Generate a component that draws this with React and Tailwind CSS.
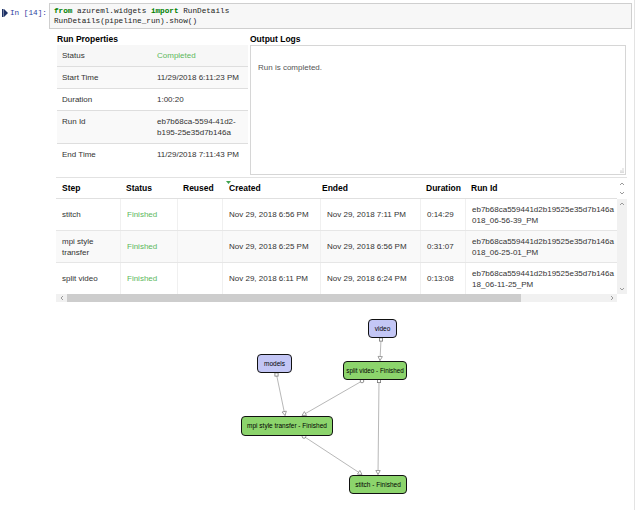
import React from "react";

const Chev = ({ d }) => {
  const paths = {
    up: "M1 4 L3 2 L5 4",
    down: "M1 2 L3 4 L5 2",
    left: "M4 1 L2 3 L4 5",
    right: "M2 1 L4 3 L2 5",
  };
  return (
    <svg width="6" height="6" viewBox="0 0 6 6" className="block">
      <path d={paths[d]} fill="none" stroke="#9a9a9a" strokeWidth="1" />
    </svg>
  );
};

const steps = [
  {
    step: ["stitch"],
    created: "Nov 29, 2018 6:56 PM",
    ended: "Nov 29, 2018 7:11 PM",
    dur: "0:14:29",
    id2: "018_06-56-39_PM",
    bg: "bg-white",
  },
  {
    step: ["mpi style", "transfer"],
    created: "Nov 29, 2018 6:25 PM",
    ended: "Nov 29, 2018 6:56 PM",
    dur: "0:31:07",
    id2: "018_06-25-01_PM",
    bg: "bg-[#f9f9f9]",
  },
  {
    step: ["split video"],
    created: "Nov 29, 2018 6:11 PM",
    ended: "Nov 29, 2018 6:24 PM",
    dur: "0:13:08",
    id2: "18_06-11-25_PM",
    bg: "bg-white",
  },
];

function arrowHead(x1, y1, x2, y2) {
  const dx = x2 - x1;
  const dy = y2 - y1;
  const L = Math.hypot(dx, dy);
  const ux = dx / L;
  const uy = dy / L;
  const bx = x2 - ux * 4;
  const by = y2 - uy * 4;
  const px = -uy * 2.2;
  const py = ux * 2.2;
  return `${x2},${y2} ${bx + px},${by + py} ${bx - px},${by - py}`;
}

const edges = [
  { x1: 381, y1: 340.5, x2: 380, y2: 361.5, port: "sq" },
  { x1: 276.5, y1: 375.5, x2: 285, y2: 416.5, port: "sq" },
  { x1: 362, y1: 382, x2: 302, y2: 416.5, port: "ci" },
  { x1: 379, y1: 382, x2: 378, y2: 475.5, port: "sq" },
  { x1: 304, y1: 437.5, x2: 362, y2: 475.5, port: "ci" },
];

export default function App() {
  return (
    <div className="w-[640px] h-[510px] bg-white overflow-hidden font-['Liberation_Sans',Arial,sans-serif] text-[#333]">
      <div className="w-[635px] h-full border-r border-[#e3e3e3] flex flex-col">
        {/* code cell */}
        <div className="flex mt-[3px]">
          <div className="w-[49px] shrink-0 flex items-start pt-[5px]">
            <svg width="6" height="8" viewBox="0 0 6 8" className="ml-[2px] mt-[1px]">
              <rect x="0" y="0" width="1.6" height="8" fill="#1e3266" />
              <polygon points="2,0 6,4 2,8" fill="#1e3266" />
            </svg>
            <span className="ml-[2px] font-['Liberation_Mono',monospace] text-[7.7px] leading-[10px] text-[#303f9f]">
              In [14]:
            </span>
          </div>
          <div className="flex-1 mr-[2px] h-[26px] border border-[#cfcfcf] bg-[#f7f7f7] pl-[4px] pt-[2px] font-['Liberation_Mono',monospace] text-[7.7px] leading-[10.4px] text-[#222] whitespace-pre">
            <div>
              <span className="text-[#008000] font-bold">from</span> azureml.widgets{" "}
              <span className="text-[#008000] font-bold">import</span> RunDetails
            </div>
            <div>RunDetails(pipeline_run).show()</div>
          </div>
        </div>

        {/* output */}
        <div className="ml-[56px] w-[572px] flex flex-col">
          <div className="flex gap-[2px] mt-[4px]">
            <div className="w-[192px] pl-[1px]">
              <div className="h-[12px] leading-[12px] text-[8.5px] font-bold text-black">
                Run Properties
              </div>
              <div className="text-[8px] leading-[11px]">
                <div className="flex py-[5px] bg-[#f7f7f7]">
                  <div className="w-[100px] pl-[5px]">Status</div>
                  <div className="text-[#5cb85c]">Completed</div>
                </div>
                <div className="flex py-[5px] border-t border-[#dedede] bg-[#f9f9f9]">
                  <div className="w-[100px] pl-[5px]">Start Time</div>
                  <div>11/29/2018 6:11:23 PM</div>
                </div>
                <div className="flex py-[5px] border-t border-[#dedede] bg-white">
                  <div className="w-[100px] pl-[5px]">Duration</div>
                  <div>1:00:20</div>
                </div>
                <div className="flex py-[5px] border-t border-[#dedede] bg-[#f9f9f9]">
                  <div className="w-[100px] pl-[5px]">Run Id</div>
                  <div>
                    <div>eb7b68ca-5594-41d2-</div>
                    <div>b195-25e35d7b146a</div>
                  </div>
                </div>
                <div className="flex py-[5px] border-t border-[#dedede] bg-white">
                  <div className="w-[100px] pl-[5px]">End Time</div>
                  <div>11/29/2018 7:11:43 PM</div>
                </div>
              </div>
            </div>
            <div className="w-[376px]">
              <div className="h-[12px] leading-[12px] text-[8.5px] font-bold text-black">
                Output Logs
              </div>
              <div className="relative h-[130px] border border-[#d6d6d6] bg-white pl-[7px] pt-[16px] text-[8px] leading-[11px] text-[#555]">
                Run is completed.
                <svg width="5" height="5" viewBox="0 0 5 5" className="absolute right-[1px] bottom-[1px]">
                  <rect x="3.5" y="0.5" width="1" height="1" fill="#aaa" />
                  <rect x="1.5" y="2.5" width="1" height="1" fill="#aaa" />
                  <rect x="3.5" y="2.5" width="1" height="1" fill="#aaa" />
                  <rect x="3.5" y="3.8" width="1" height="1" fill="#aaa" />
                  <rect x="1.5" y="3.8" width="1" height="1" fill="#aaa" />
                </svg>
              </div>
            </div>
          </div>

          {/* steps table */}
          <div className="mt-[2px] w-[571px] border-t border-[#e2e2e2] flex flex-col">
            <div className="flex">
              <div className="w-[561px] overflow-hidden">
                <div className="flex h-[21px] items-center text-[8.5px] font-bold text-black border-b border-[#e0e0e0]">
                  <div className="w-[64px] shrink-0 pl-[6px]">Step</div>
                  <div className="w-[57px] shrink-0 pl-[6px]">Status</div>
                  <div className="w-[45px] shrink-0 pl-[6px]">Reused</div>
                  <div className="relative w-[94px] shrink-0 pl-[7px]">
                    <svg width="5" height="3" viewBox="0 0 5 3" className="absolute left-[4px] top-[-1px]">
                      <polygon points="0,0 5,0 2.5,3" fill="#3fa34d" />
                    </svg>
                    Created
                  </div>
                  <div className="w-[104px] shrink-0 pl-[6px]">Ended</div>
                  <div className="w-[45px] shrink-0 pl-[6px]">Duration</div>
                  <div className="w-[152px] shrink-0 pl-[6px]">Run Id</div>
                </div>
                {steps.map((s, i) => (
                  <div
                    key={i}
                    className={`flex items-center text-[8px] leading-[11px] ${s.bg} ${i > 0 ? "border-t border-[#e6e6e6]" : ""}`}
                  >
                    <div className="w-[64px] shrink-0 pl-[6px] self-stretch flex flex-col justify-center">
                      {s.step.map((t) => (
                        <div key={t}>{t}</div>
                      ))}
                    </div>
                    <div className="w-[57px] shrink-0 pl-[6px] self-stretch flex items-center border-l border-[#f0f0f0] text-[#5cb85c]">
                      Finished
                    </div>
                    <div className="w-[45px] shrink-0 self-stretch border-l border-[#f0f0f0]"></div>
                    <div className="w-[98px] shrink-0 pl-[6px] self-stretch flex items-center border-l border-[#f0f0f0]">
                      {s.created}
                    </div>
                    <div className="w-[100px] shrink-0 pl-[6px] self-stretch flex items-center border-l border-[#f0f0f0]">
                      {s.ended}
                    </div>
                    <div className="w-[45px] shrink-0 pl-[6px] self-stretch flex items-center border-l border-[#f0f0f0]">
                      {s.dur}
                    </div>
                    <div className="w-[152px] shrink-0 pl-[6px] py-[4.5px] border-l border-[#f0f0f0] whitespace-nowrap overflow-hidden">
                      <div>eb7b68ca559441d2b19525e35d7b146a</div>
                      <div>{s.id2}</div>
                    </div>
                  </div>
                ))}
              </div>
              <div className="w-[10px] flex flex-col">
                <div className="h-[21px] bg-white flex flex-col items-center justify-center gap-[3px]">
                  <Chev d="up" />
                  <Chev d="down" />
                </div>
                <div className="flex-1 bg-[#f1f1f1] flex flex-col items-center justify-between py-[2px]">
                  <Chev d="up" />
                  <Chev d="down" />
                </div>
              </div>
            </div>
            <div className="w-[561px] h-[8px] bg-[#f1f1f1] flex items-center">
              <div className="w-[11px] flex justify-center">
                <Chev d="left" />
              </div>
              <div className="w-[454px] h-[8px] bg-[#cdcdcd]"></div>
              <div className="flex-1"></div>
              <div className="w-[11px] flex justify-center">
                <Chev d="right" />
              </div>
            </div>
          </div>
        </div>

        {/* diagram */}
        <div className="relative flex-1 text-black">
          <svg className="absolute left-0 top-0" width="634" height="207" viewBox="0 303 634 207">
            {edges.map((e, i) => (
              <g key={i}>
                <line x1={e.x1} y1={e.y1} x2={e.x2} y2={e.y2} stroke="#b8b8b8" strokeWidth="1" />
                <polygon points={arrowHead(e.x1, e.y1, e.x2, e.y2)} fill="#fff" stroke="#8a8a8a" strokeWidth="0.8" />
                {e.port === "sq" ? (
                  <rect x={e.x1 - 1.6} y={e.y1 - 1.6} width="3.2" height="3.2" fill="#fff" stroke="#777" strokeWidth="0.8" />
                ) : (
                  <circle cx={e.x1} cy={e.y1} r="1.8" fill="#fff" stroke="#777" strokeWidth="0.8" />
                )}
              </g>
            ))}
          </svg>
          <div className="absolute left-[368px] top-[17px] w-[29px] h-[19px] rounded-[4px] border border-[#111] bg-[#c3c6f5] flex items-center justify-center text-[6.5px] whitespace-nowrap">
            video
          </div>
          <div className="absolute left-[257px] top-[52px] w-[35px] h-[19px] rounded-[4px] border border-[#111] bg-[#c3c6f5] flex items-center justify-center text-[6.5px] whitespace-nowrap">
            models
          </div>
          <div className="absolute left-[343px] top-[59px] w-[64px] h-[19px] rounded-[4px] border border-[#111] bg-[#8cd46c] flex items-center justify-center text-[6.3px] whitespace-nowrap">
            split video - Finished
          </div>
          <div className="absolute left-[241px] top-[114px] w-[92px] h-[20px] rounded-[4px] border border-[#111] bg-[#8cd46c] flex items-center justify-center text-[6.5px] whitespace-nowrap">
            mpi style transfer - Finished
          </div>
          <div className="absolute left-[349px] top-[173px] w-[58px] h-[19px] rounded-[4px] border border-[#111] bg-[#8cd46c] flex items-center justify-center text-[6.5px] whitespace-nowrap">
            stitch - Finished
          </div>
        </div>
      </div>
    </div>
  );
}
